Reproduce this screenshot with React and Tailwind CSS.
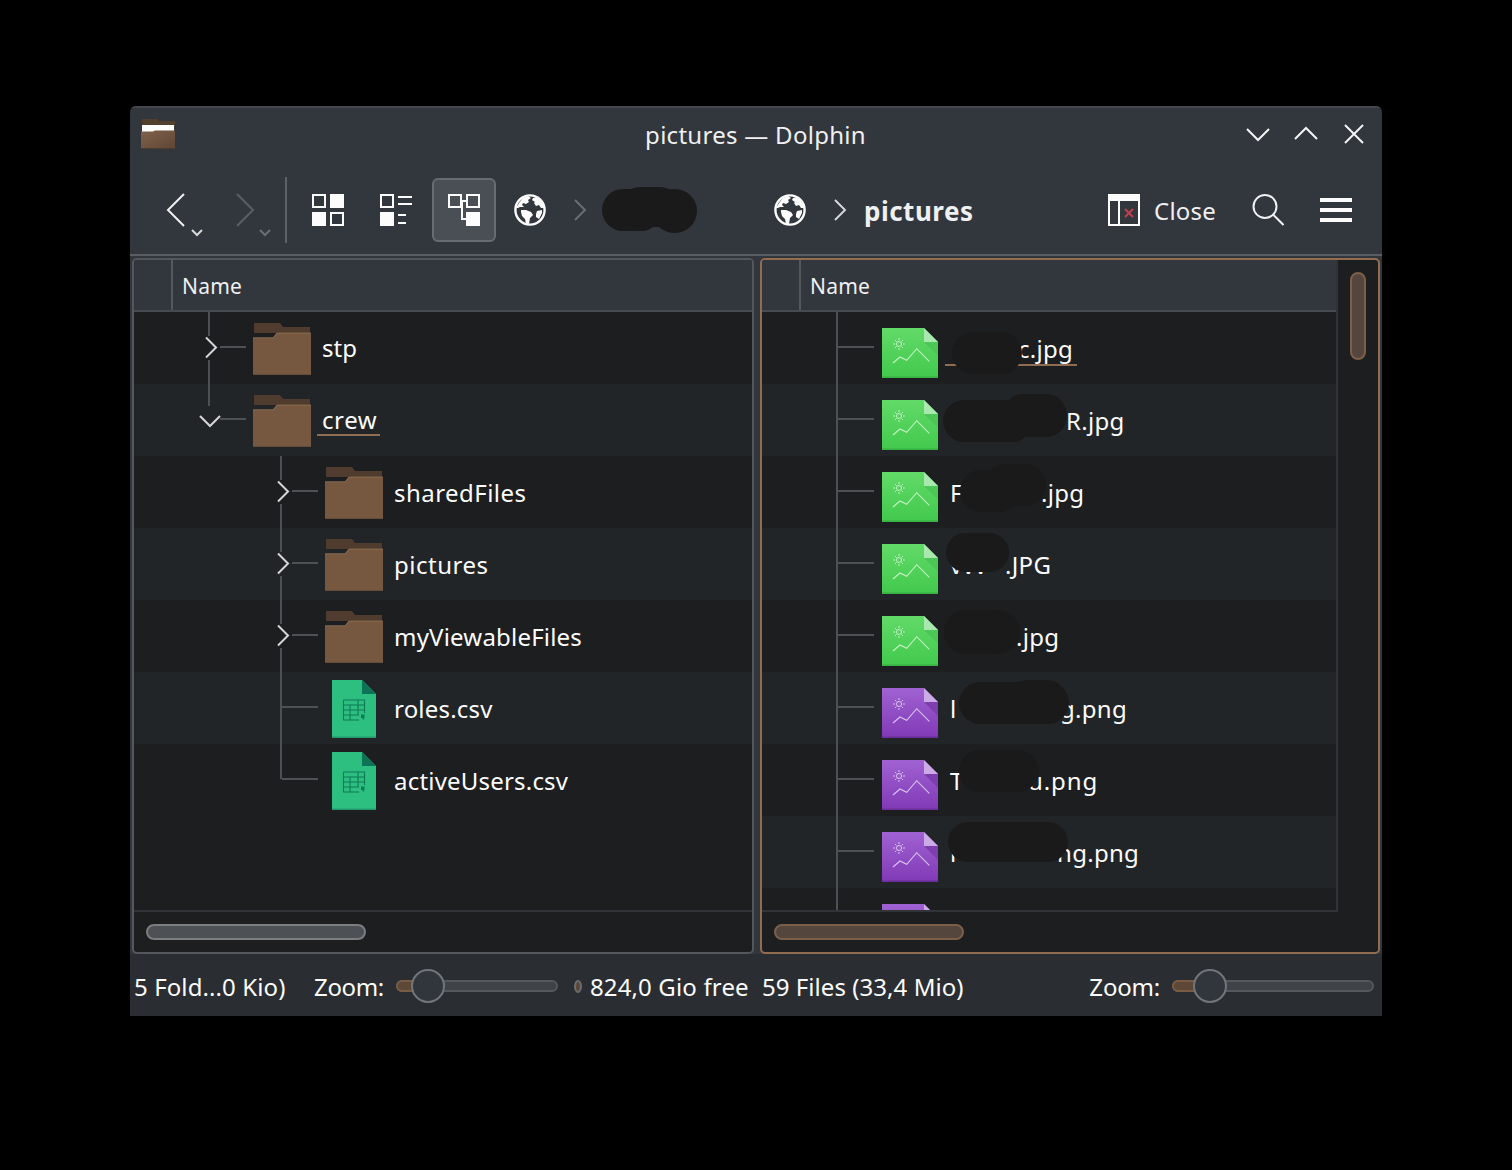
import React from "react";

const Globe = () => (
  <svg width="32" height="32" viewBox="0 0 32 32" className="shrink-0">
    <circle cx="16" cy="16" r="14.6" fill="none" stroke="#fcfcfc" strokeWidth="2.4" />
    <path d="M2 14l3-5 4-5 5-2 3 2-3 2 1 2-3 2-3-1-1 2 2 2-4 0-2 1zM19 4l4-1 5 5 2 6-3 0-2-3-3 1-2-3 1-1-3-2zM7 16l5 0 5 2 2 3-3 3-1 6-3 0-1-5-3-3-1-4zM23 17l5-1 0 3-3 6-3-2 0-3z" fill="#fcfcfc" />
  </svg>
);

const Folder = () => (
  <svg width="58" height="52" viewBox="0 0 58 52" className="shrink-0">
    <path d="M1 0H27L30 4H57V10H1Z" fill="#4f3c2e" />
    <path d="M0 14.500H20L24 9.700H58V52H0Z" fill="#75583f" />
    <path d="M0 14.500H20L24 9.700H58V10.400H24.400L20.400 15.200H0Z" fill="#8d7259" />
    <rect y="51" width="58" height="1" fill="#664c37" />
  </svg>
);

const CsvIcon = () => (
  <svg width="44" height="58" viewBox="0 0 44 58" className="shrink-0">
    <path d="M0 0H30L44 14V58H0Z" fill="#2dbf80" />
    <path d="M30 0L44 14H30Z" fill="#0d7256" />
    <rect y="56.500" width="44" height="1.500" fill="#22996a" />
    <path d="M11.500 20H32.500V33M11.500 20V40H27M11.500 25H32.500M11.500 30H32.500M11.500 35H27M18 25V40M26 20V35" fill="none" stroke="#0f7a56" strokeWidth="1.100" />
    <path d="M29 34.500h3.500v3l-1.500 3-.5-2.500h-1.500z" fill="#0f7a56" />
  </svg>
);

const ImageIcon = ({ c1, c2, c3, fold, fold2, line }) => {
  const id = c1.slice(1);
  return (
    <svg width="56" height="50" viewBox="0 0 56 50" className="shrink-0">
      <defs>
        <linearGradient id={"g" + id} x1="0" y1="0" x2="0" y2="1">
          <stop offset="0" stopColor={c1} />
          <stop offset="1" stopColor={c2} />
        </linearGradient>
      </defs>
      <path d="M0 0H42L56 14V50H0Z" fill={"url(#g" + id + ")"} />
      <path d="M42 14H56V28Z" fill={fold2} />
      <path d="M42 0L56 14H42Z" fill={fold} />
      <rect y="48.500" width="56" height="1.500" fill={c3} />
      <g stroke={line} fill="none" strokeWidth="1">
        <circle cx="17" cy="16" r="2.500" />
        <path d="M17 10v2M17 20v2M11 16h2M21 16h2M13 12l1.500 1.500M19.500 18.500l1.500 1.500M13 20l1.500-1.500M19.500 13.500l1.500-1.500" />
        <path d="M11 35L18 29L24.700 32.300L34.700 20.700L47.300 33.300" strokeWidth="1.100" />
      </g>
    </svg>
  );
};

const green = { c1: "#62da69", c2: "#42c94c", c3: "#38b042", fold: "#a9e8ae", fold2: "#4cc656", line: "#c4f0c6" };
const purple = { c1: "#a062d2", c2: "#8039b6", c3: "#6c2f9b", fold: "#ccaae6", fold2: "#7d3fae", line: "#dac4ee" };

const Branch = ({ width, x, type, last }) => (
  <svg width={width} height="72" viewBox={`0 0 ${width} 72`} className="shrink-0">
    {type === "open" ? (
      <path d={`M${x} 0V22`} stroke="#4d5155" strokeWidth="2" fill="none" />
    ) : (
      <path d={`M${x} 0V${last ? 35 : 72}`} stroke="#4d5155" strokeWidth="2" fill="none" />
    )}
    <path d={`M${x + (type ? 11 : 1)} 35H${x + 37}`} stroke="#4d5155" strokeWidth="2" fill="none" />
    {type === "closed" && (
      <>
        <rect x={x - 3} y="24" width="14" height="24" fill="currentColor" />
        <path d={`M${x - 3} 25.500L${x + 7} 35.500L${x - 3} 45.500`} stroke="#d5d6d7" strokeWidth="2" fill="none" />
      </>
    )}
    {type === "open" && (
      <path d={`M${x - 9} 32L${x + 1} 42L${x + 11} 32`} stroke="#d5d6d7" strokeWidth="2" fill="none" />
    )}
  </svg>
);

const Label = ({ children, underline, track = "" }) => (
  <span className={"text-[24px] leading-[32px] text-[#fcfcfc] whitespace-nowrap " + track + (underline ? " relative" : "")}>
    {children}
    {underline && <span className="absolute left-[-5px] right-[-3px] top-[31px] h-[2px] bg-[#8f6d52]" />}
  </span>
);

const Blob = ({ className }) => <span className={"absolute bg-[#1a1a1a] " + className} />;

const DARK = "#1c1e20";
const ALT = "#222528";

const leftRows = [
  { name: "stp", kind: "folder", w: 119, x: 75, type: "closed", bg: DARK, track: "", pt: "pt-[20px]" },
  { name: "crew", kind: "folder", w: 119, x: 75, type: "open", bg: ALT, ul: true, track: "tracking-[0.6px]", pt: "pt-[20px]" },
  { name: "sharedFiles", kind: "folder", w: 191, x: 147, type: "closed", bg: DARK, track: "tracking-[0.45px]", pt: "pt-[21px]" },
  { name: "pictures", kind: "folder", w: 191, x: 147, type: "closed", bg: ALT, track: "tracking-[0.5px]", pt: "pt-[21px]" },
  { name: "myViewableFiles", kind: "folder", w: 191, x: 147, type: "closed", bg: DARK, track: "tracking-[0.2px]", pt: "pt-[21px]" },
  { name: "roles.csv", kind: "csv", w: 198, x: 147, bg: ALT, track: "tracking-[0.2px]", pt: "pt-[21px]" },
  { name: "activeUsers.csv", kind: "csv", w: 198, x: 147, bg: DARK, last: true, track: "tracking-[0.2px]", pt: "pt-[21px]" },
];

const rightRows = [
  { n: "c.jpg", p: 68, i: green, ul: true, b: ["left-[190px] top-[20px] w-[70px] h-[42px] rounded-[21px]"] },
  { n: "R.jpg", p: 116, i: green, b: ["left-[181px] top-[16px] w-[90px] h-[42px] rounded-[21px]", "left-[240px] top-[10px] w-[65px] h-[43px] rounded-[21px]"] },
  { n: ".jpg", p: 91, t: "F", i: green, b: ["left-[198px] top-[14px] w-[60px] h-[42px] rounded-[21px]", "left-[222px] top-[8px] w-[62px] h-[42px] rounded-[21px]"] },
  { n: ".JPG", p: 55, t: "vvv", i: green, b: ["left-[184px] top-[5px] w-[63px] h-[39px] rounded-[20px]"] },
  { n: ".jpg", p: 66, i: green, b: ["left-[182px] top-[10px] w-[76px] h-[44px] rounded-[22px]"] },
  { n: "g.png", p: 110, t: "l", i: purple, b: ["left-[197px] top-[10px] w-[110px] h-[42px] rounded-[21px]", "left-[245px] top-[8px] w-[60px] h-[40px] rounded-[20px]"] },
  { n: "u.png", p: 78, t: "T", i: purple, track: "tracking-[0.9px]", b: ["left-[197px] top-[6px] w-[80px] h-[42px] rounded-[21px]"] },
  { n: "ng.png", p: 107, t: "l", i: purple, b: ["left-[186px] top-[6px] w-[120px] h-[40px] rounded-[20px]"] },
];

function Slider({ width, pos }) {
  return (
    <div className="relative h-[12px] rounded-full border-2 border-[#55585c] bg-[#3f4246] shrink-0" style={{ width }}>
      <div className="absolute left-[-2px] top-[-2px] h-[12px] rounded-l-full border-2 border-[#7a5c44] bg-[#5d4837]" style={{ width: pos }} />
      <div className="absolute top-[-13px] h-[34px] w-[34px] rounded-full border-2 border-[#72767a] bg-[#31363d]" style={{ left: pos - 19 }} />
    </div>
  );
}

function Header() {
  return (
    <div className="flex h-[52px] border-b-2 border-[#474b50] bg-[#32363d] shrink-0">
      <div className="w-[39px] border-r-2 border-[#54585c]" />
      <span className="pl-[9px] pt-[11px] text-[21px] leading-[30px] tracking-[0.2px] text-[#eff0f1]">Name</span>
    </div>
  );
}

export default function App() {
  return (
    <div className="h-[1170px] w-[1512px] bg-black pl-[130px] pt-[106px]" style={{ fontFamily: '"Noto Sans", sans-serif' }}>
      <div className="flex h-[910px] w-[1252px] flex-col overflow-hidden rounded-t-[6px] bg-[#32363d]">
        {/* title bar */}
        <div className="flex h-[56px] shrink-0 items-center border-t-2 border-[#43474c] pl-[11px] pr-[16px]">
          <svg width="34" height="32" viewBox="0 0 34 32" className="shrink-0">
            <defs>
              <linearGradient id="tfolder" x1="0" y1="0" x2="1" y2="1">
                <stop offset="0" stopColor="#80624b" />
                <stop offset="1" stopColor="#5e4635" />
              </linearGradient>
            </defs>
            <path d="M1 0H16L18 2H34V8H1Z" fill="#52402f" />
            <rect x="1" y="6" width="32" height="7" fill="#fdfdfd" />
            <path d="M0 12.500H12L14 11.500H34V30H0Z" fill="url(#tfolder)" />
            <rect y="29" width="34" height="1" fill="#4f3c2d" />
          </svg>
          <div className="flex-1 pl-[90px] text-center text-[24px] leading-[32px] tracking-[0.28px] text-[#eff0f1]">pictures — Dolphin</div>
          <div className="mb-[2px] flex items-center gap-[24px]">
            <svg width="24" height="24" viewBox="0 0 24 24" fill="none"><path d="M1 7L12 18L23 7" stroke="#f3f4f4" strokeWidth="2" /></svg>
            <svg width="24" height="24" viewBox="0 0 24 24" fill="none"><path d="M1 17L12 6L23 17" stroke="#f3f4f4" strokeWidth="2" /></svg>
            <svg width="24" height="24" viewBox="0 0 24 24" fill="none"><path d="M3 3L21 21M21 3L3 21" stroke="#f3f4f4" strokeWidth="2" /></svg>
          </div>
        </div>

        {/* toolbar */}
        <div className="flex h-[94px] shrink-0 items-start border-b-2 border-[#5a5e62] pt-[15px]">
          <div className="flex h-[66px] items-center">
            <svg width="40" height="48" viewBox="0 0 40 48" fill="none" className="ml-[36px] shrink-0 mt-[6px]">
              <path d="M18 5L2 21L18 37" stroke="#eff0f1" strokeWidth="2" />
              <path d="M26 41L31 46L36 41" stroke="#d8d9da" strokeWidth="2" />
            </svg>
            <svg width="40" height="48" viewBox="0 0 40 48" fill="none" className="ml-[26px] shrink-0 mt-[6px]">
              <path d="M5 5L21 21L5 37" stroke="#5b5f63" strokeWidth="2" />
              <path d="M28 41L33 46L38 41" stroke="#6a6e72" strokeWidth="2" />
            </svg>
            <div className="ml-[13px] h-[66px] w-[2px] shrink-0 bg-[#5d6165]" />
            <svg width="32" height="32" viewBox="0 0 32 32" className="ml-[25px] shrink-0" fill="none">
              <rect x="1" y="1" width="12" height="12" stroke="#fcfcfc" strokeWidth="2" />
              <rect x="18" y="0" width="14" height="14" fill="#fcfcfc" />
              <rect x="0" y="18" width="14" height="14" fill="#fcfcfc" />
              <rect x="19" y="19" width="12" height="12" stroke="#fcfcfc" strokeWidth="2" />
            </svg>
            <svg width="32" height="32" viewBox="0 0 32 32" className="ml-[36px] shrink-0" fill="none">
              <rect x="1" y="1" width="12" height="12" stroke="#fcfcfc" strokeWidth="2" />
              <rect x="0" y="18" width="14" height="14" fill="#fcfcfc" />
              <path d="M18 3H32M18 10H32M18 21H26M18 29H26" stroke="#fcfcfc" strokeWidth="2" />
            </svg>
            <div className="ml-[20px] flex h-[64px] w-[64px] shrink-0 items-center justify-center rounded-[6px] border-2 border-[#686b70] bg-[#4a4e55]">
              <svg width="32" height="32" viewBox="0 0 32 32" fill="none">
                <rect x="1" y="1" width="12" height="12" stroke="#fcfcfc" strokeWidth="2" />
                <rect x="19" y="1" width="12" height="12" stroke="#fcfcfc" strokeWidth="2" />
                <rect x="18" y="18" width="14" height="14" fill="#fcfcfc" />
                <path d="M13 7H19M14 7V25H18" stroke="#fcfcfc" strokeWidth="2" />
              </svg>
            </div>
            <div className="ml-[18px]"><Globe /></div>
            <svg width="14" height="24" viewBox="0 0 14 24" fill="none" className="ml-[27px] shrink-0">
              <path d="M2 2L12 12L2 22" stroke="#696d71" strokeWidth="2" />
            </svg>
            <div className="ml-[15px] relative h-[46px] w-[95px] shrink-0">
              <span className="absolute left-0 top-[2px] h-[42px] w-[60px] rounded-[21px] bg-[#1a1a1a]" />
              <span className="absolute left-[18px] top-0 h-[40px] w-[60px] rounded-[20px] bg-[#1a1a1a]" />
              <span className="absolute left-[50px] top-[2px] h-[44px] w-[45px] rounded-[22px] bg-[#1a1a1a]" />
            </div>
            <div className="ml-[77px]"><Globe /></div>
            <svg width="14" height="24" viewBox="0 0 14 24" fill="none" className="ml-[27px] shrink-0">
              <path d="M2 2L12 12L2 22" stroke="#d5d6d7" strokeWidth="2" />
            </svg>
            <span className="ml-[17px] mt-[2px] text-[26px] font-bold leading-[36px] tracking-[0.5px] text-[#eff0f1]">pictures</span>
          </div>
          <div className="ml-auto flex h-[66px] items-center pr-[30px]">
            <svg width="32" height="32" viewBox="0 0 32 32" fill="none" className="shrink-0">
              <rect x="0" y="0" width="32" height="32" fill="#fcfcfc" />
              <rect x="2" y="7" width="8" height="23" fill="#32363d" />
              <rect x="12" y="7" width="18" height="23" fill="#32363d" />
              <path d="M17 15L25 23M25 15L17 23" stroke="#c2404f" strokeWidth="2" />
            </svg>
            <span className="ml-[14px] mt-[2px] text-[24px] leading-[32px] tracking-[0.2px] text-[#eff0f1]">Close</span>
            <svg width="32" height="32" viewBox="0 0 32 32" fill="none" className="ml-[36px] shrink-0">
              <circle cx="13" cy="12.500" r="11.500" stroke="#eff0f1" strokeWidth="2" />
              <path d="M20.500 20L31.500 31" stroke="#eff0f1" strokeWidth="2" />
            </svg>
            <svg width="32" height="24" viewBox="0 0 32 24" className="ml-[36px] shrink-0">
              <rect y="0" width="32" height="4" fill="#fcfcfc" />
              <rect y="10" width="32" height="4" fill="#fcfcfc" />
              <rect y="20" width="32" height="4" fill="#fcfcfc" />
            </svg>
          </div>
        </div>

        {/* split panels */}
        <div className="flex h-[698px] shrink-0 gap-[6px] pl-[2px] pr-[2px] pt-[2px]">
          {/* left */}
          <div className="flex h-[696px] w-[622px] shrink-0 flex-col overflow-hidden rounded-[5px] border-2 border-[#54585c] bg-[#1c1e20]">
            <Header />
            <div className="h-[600px] shrink-0 overflow-hidden border-b-2 border-[#303438]">
              {leftRows.map((r) => (
                <div key={r.name} className="flex h-[72px] items-start" style={{ backgroundColor: r.bg, color: r.bg }}>
                  <Branch width={r.w} x={r.x} type={r.type} last={r.last} />
                  {r.kind === "folder" ? (
                    <div className="pt-[11px]"><Folder /></div>
                  ) : (
                    <div className="pt-[8px]"><CsvIcon /></div>
                  )}
                  <div className={(r.kind === "folder" ? "ml-[11px] " : "ml-[18px] ") + r.pt}>
                    <Label underline={r.ul} track={r.track}>{r.name}</Label>
                  </div>
                </div>
              ))}
            </div>
            <div className="flex flex-1 items-center pl-[12px]">
              <div className="h-[16px] w-[220px] rounded-full border-2 border-[#7b7e81] bg-[#4d5054]" />
            </div>
          </div>
          {/* right */}
          <div className="flex h-[696px] w-[620px] shrink-0 flex-col overflow-hidden rounded-[5px] border-2 border-[#926c50] bg-[#1c1e20]">
            <div className="flex h-[652px] shrink-0">
              <div className="flex w-[576px] shrink-0 flex-col border-r-2 border-[#303438]">
                <Header />
                <div className="h-[600px] shrink-0 overflow-hidden border-b-2 border-[#303438]">
                  {rightRows.map((r, i) => (
                    <div key={i} className="relative flex h-[72px] items-start" style={{ backgroundColor: i % 2 ? ALT : DARK }}>
                      <Branch width={120} x={75} />
                      <div className="pt-[16px]"><ImageIcon {...r.i} /></div>
                      <div className="ml-[12px] whitespace-nowrap pt-[21px]" style={{ width: r.p }}>
                        <span className="text-[24px] leading-[32px] text-[#fcfcfc]">{r.t}</span>
                      </div>
                      <div className="pt-[21px]"><Label track={r.track || "tracking-[0.3px]"}>{r.n}</Label></div>
                      {r.ul && <span className="absolute left-[183px] top-[52px] h-[2px] w-[132px] bg-[#8f6d52]" />}
                      {r.b.map((c, j) => <Blob key={j} className={c} />)}
                    </div>
                  ))}
                  <div className="flex h-[22px] items-start overflow-hidden">
                    <Branch width={120} x={75} />
                    <div className="pt-[16px]"><ImageIcon {...purple} /></div>
                  </div>
                </div>
              </div>
              <div className="flex flex-1 justify-center pt-[12px]">
                <div className="h-[88px] w-[16px] rounded-full border-2 border-[#7c5f49] bg-[#54463c]" />
              </div>
            </div>
            <div className="flex flex-1 items-center pl-[12px]">
              <div className="h-[16px] w-[190px] rounded-full border-2 border-[#7c5f49] bg-[#54463c]" />
            </div>
          </div>
        </div>

        {/* status */}
        <div className="flex flex-1 items-center bg-[#2a2e32] pt-[4px] text-[24px] leading-[32px] text-[#fcfcfc]">
          <span className="ml-[4px] w-[180px] whitespace-nowrap tracking-[0.1px]">5 Fold...0 Kio)</span>
          <span className="whitespace-nowrap tracking-[-0.35px]">Zoom:</span>
          <div className="mb-[2px] ml-[12px]"><Slider width={162} pos={32} /></div>
          <span className="mb-[2px] ml-[16px] h-[13px] w-[8px] shrink-0 rounded-[50%] border-2 border-[#6b6e71] bg-[#5d4837]" />
          <span className="ml-[8px] w-[172px] whitespace-nowrap tracking-[0.15px]">824,0 Gio free</span>
          <span className="whitespace-nowrap tracking-[0.06px]">59 Files (33,4 Mio)</span>
          <span className="ml-auto whitespace-nowrap tracking-[-0.2px]">Zoom:</span>
          <div className="mb-[2px] ml-[12px] mr-[8px]"><Slider width={202} pos={38} /></div>
        </div>
      </div>
    </div>
  );
}
